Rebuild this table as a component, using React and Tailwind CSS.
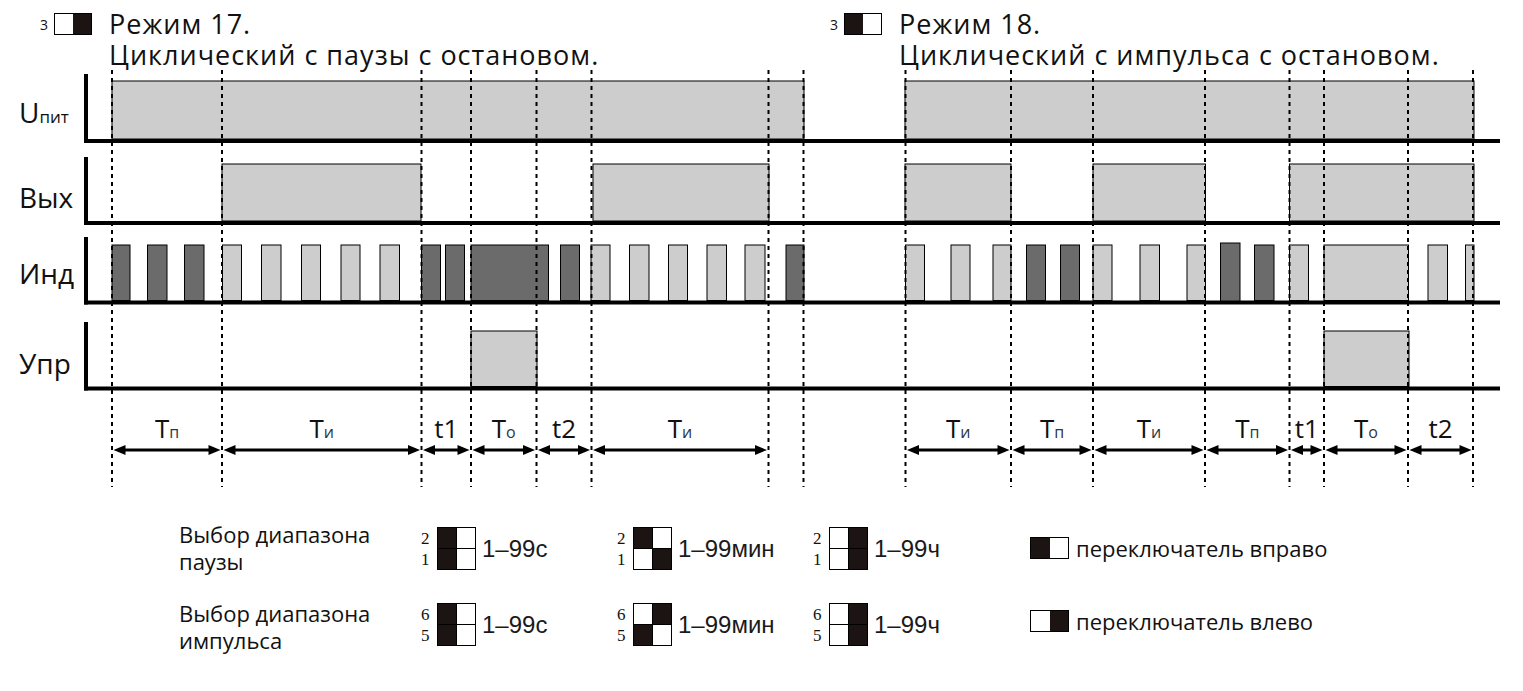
import React from "react";

const L = "#cdcdcd";
const D = "#6b6b6b";

const rows = [
  { top: 81, base: 139, segs: [[112, 804, L], [905, 1474, L]] },
  { top: 164, base: 221, segs: [[222, 421, L], [593, 769, L], [905, 1011, L], [1093, 1205.5, L], [1289.5, 1474, L]] },
  {
    top: 245,
    base: 300.5,
    segs: [
      [112, 130, D], [147.5, 167, D], [184.5, 204, D],
      [222.5, 241.5, L], [261.5, 281, L], [301.5, 320.5, L], [341, 360, L], [380, 399.5, L],
      [421.5, 440.5, D], [445.5, 464.5, D], [471, 548.5, D], [560.5, 579.5, D],
      [591, 610, L], [629.5, 649, L], [668.5, 687.5, L], [707, 726.5, L], [745, 765, L],
      [786, 804, D],
      [905.5, 924.5, L], [951, 970, L], [993, 1011, L],
      [1026.5, 1045.5, D], [1060.5, 1079.5, D],
      [1093, 1112, L], [1140, 1159.5, L], [1187, 1205.5, L],
      [1220.5, 1240, D, 243], [1254.5, 1274, D],
      [1289.5, 1308.5, L], [1324, 1408.5, L], [1428, 1447.5, L], [1465.5, 1474, L],
    ],
  },
  { top: 331, base: 386.5, segs: [[471, 537, L], [1324, 1409, L]] },
];

const axes = [[74, 143], [157, 225], [237, 304.5], [322, 390.5]];

const dashed = [112, 222, 421.5, 471, 536.5, 591.5, 768.5, 803.5, 905.5, 1011, 1093, 1205, 1289.5, 1324, 1408, 1473];

const spans = [
  [112, 222, "T", "п"],
  [222, 421.5, "T", "и"],
  [421.5, 471, "t1", ""],
  [471, 536.5, "T", "o"],
  [536.5, 591.5, "t2", ""],
  [591.5, 768.5, "T", "и"],
  [905.5, 1011, "T", "и"],
  [1011, 1093, "T", "п"],
  [1093, 1205, "T", "и"],
  [1205, 1289.5, "T", "п"],
  [1289.5, 1324, "t1", ""],
  [1324, 1408, "T", "o"],
  [1408, 1473, "t2", ""],
];

function Arrow({ x1, x2, y }) {
  const a = 1.5;
  return (
    <g>
      <line x1={x1 + 6} x2={x2 - 6} y1={y} y2={y} stroke="#000" strokeWidth="3" />
      <polygon points={`${x1 + a},${y} ${x1 + a + 12},${y - 5} ${x1 + a + 12},${y + 5}`} fill="#000" />
      <polygon points={`${x2 - a},${y} ${x2 - a - 12},${y - 5} ${x2 - a - 12},${y + 5}`} fill="#000" />
    </g>
  );
}

function Chart() {
  return (
    <svg width="1443" height="425" viewBox="80 68 1443 425" className="block shrink-0">
      {rows.map((r, i) =>
        r.segs.map((s, j) => (
          <rect
            key={`${i}-${j}`}
            x={s[0]}
            y={s[3] ?? r.top}
            width={s[1] - s[0]}
            height={r.base - (s[3] ?? r.top) + (s[3] ? 3 : 0)}
            fill={s[2]}
            stroke="#000"
            strokeWidth="1"
          />
        ))
      )}
      {dashed.map((x) => (
        <line key={x} x1={x} x2={x} y1="70" y2="487" stroke="#000" strokeWidth="2" strokeDasharray="4 4" />
      ))}
      {rows.map((r, i) => (
        <rect key={`b${i}`} x="84" y={r.base} width="1416" height="4" fill="#000" />
      ))}
      {axes.map((a, i) => (
        <rect key={`a${i}`} x="84" y={a[0]} width="4" height={a[1] - a[0]} fill="#000" />
      ))}
      {spans.map((s, i) => (
        <g key={`s${i}`}>
          <text
            x={(s[0] + s[1]) / 2}
            y="438"
            textAnchor="middle"
            fontFamily="'Open Sans', sans-serif"
            fontSize="26"
            fill="#111"
          >
            {s[2]}
            {s[3] && <tspan fontSize="16" fill="#2a3644">{s[3]}</tspan>}
          </text>
          <Arrow x1={s[0]} x2={s[1]} y={450} />
        </g>
      ))}
    </svg>
  );
}

function HeaderBlock({ darkLeft, title, subtitle, className }) {
  return (
    <div className={`flex items-start ${className}`}>
      <span className="mt-[8px] w-[9px] text-[14px] leading-[14px] text-[#111]">3</span>
      <div className="ml-[5px] mt-[3px] flex h-[22px] w-[38px] border border-black">
        <div className={`flex-1 ${darkLeft ? "bg-[#1c1412]" : "bg-white"}`} />
        <div className={`flex-1 ${darkLeft ? "bg-white" : "bg-[#1c1412]"}`} />
      </div>
      <div className="ml-[17px] flex flex-col gap-[4px] text-[27px] leading-[27px] tracking-[1px] text-[#111]">
        <div>{title}</div>
        <div>{subtitle}</div>
      </div>
    </div>
  );
}

const K = "bg-[#1c1412]";
const W = "bg-white";

function Box({ cells, top, bottom, label }) {
  return (
    <div className="flex items-center">
      <div className="flex w-[16px] flex-col font-['Liberation_Serif',serif] text-[17px] leading-[21px] text-[#111]">
        <span>{top}</span>
        <span>{bottom}</span>
      </div>
      <div className="grid h-[43px] w-[39px] grid-cols-2 grid-rows-2 gap-px border border-black bg-black">
        {cells.map((c, i) => (
          <div key={i} className={c ? K : W} />
        ))}
      </div>
      <span className="ml-[6px] font-['Liberation_Sans',sans-serif] text-[24px] leading-[24px] text-[#1a1a1a]">{label}</span>
    </div>
  );
}

function Switch({ darkLeft }) {
  return (
    <div className="flex h-[22px] w-[39px] border border-black">
      <div className={`flex-1 ${darkLeft ? K : W}`} />
      <div className={`flex-1 ${darkLeft ? W : K}`} />
    </div>
  );
}

export default function App() {
  return (
    <div className="h-[691px] w-[1523px] overflow-hidden bg-white font-['Open_Sans',sans-serif] text-[#111]">
      <div className="flex h-[68px] pl-[40px] pt-[10px]">
        <HeaderBlock
          className="w-[790px]"
          darkLeft={false}
          title="Режим 17."
          subtitle="Циклический с паузы с остановом."
        />
        <HeaderBlock darkLeft={true} title="Режим 18." subtitle="Циклический с импульса с остановом." />
      </div>

      <div className="flex h-[425px]">
        <div className="flex w-[80px] shrink-0 flex-col pl-[19px] text-[28px] leading-[28px] text-[#111]">
          <div className="mt-[30px]">
            U<span className="text-[17px]">пит</span>
          </div>
          <div className="mt-[52px]">Вых</div>
          <div className="mt-[48px]">Инд</div>
          <div className="mt-[62px]">Упр</div>
        </div>
        <Chart />
      </div>

      <div className="grid grid-cols-[242px_196px_196px_217px_1fr] gap-y-[25px] pl-[179px] pt-[28px]">
        <div className="text-[22px] leading-[27px] text-[#111]">
          <div>Выбор диапазона</div>
          <div>паузы</div>
        </div>
        <div className="pt-[6px]">
          <Box top="2" bottom="1" cells={[1, 0, 1, 0]} label="1–99с" />
        </div>
        <div className="pt-[6px]">
          <Box top="2" bottom="1" cells={[1, 0, 0, 1]} label="1–99мин" />
        </div>
        <div className="pt-[6px]">
          <Box top="2" bottom="1" cells={[0, 1, 0, 1]} label="1–99ч" />
        </div>
        <div className="flex items-center gap-[7px] pt-[16px] self-start text-[22px] leading-[22px]">
          <Switch darkLeft={true} />
          <span>переключатель вправо</span>
        </div>

        <div className="text-[22px] leading-[27px] text-[#111]">
          <div>Выбор диапазона</div>
          <div>импульса</div>
        </div>
        <div className="pt-[3px]">
          <Box top="6" bottom="5" cells={[1, 0, 1, 0]} label="1–99с" />
        </div>
        <div className="pt-[3px]">
          <Box top="6" bottom="5" cells={[0, 1, 1, 0]} label="1–99мин" />
        </div>
        <div className="pt-[3px]">
          <Box top="6" bottom="5" cells={[0, 1, 0, 1]} label="1–99ч" />
        </div>
        <div className="flex items-center gap-[7px] pt-[10px] self-start text-[22px] leading-[22px]">
          <Switch darkLeft={false} />
          <span>переключатель влево</span>
        </div>
      </div>
    </div>
  );
}
